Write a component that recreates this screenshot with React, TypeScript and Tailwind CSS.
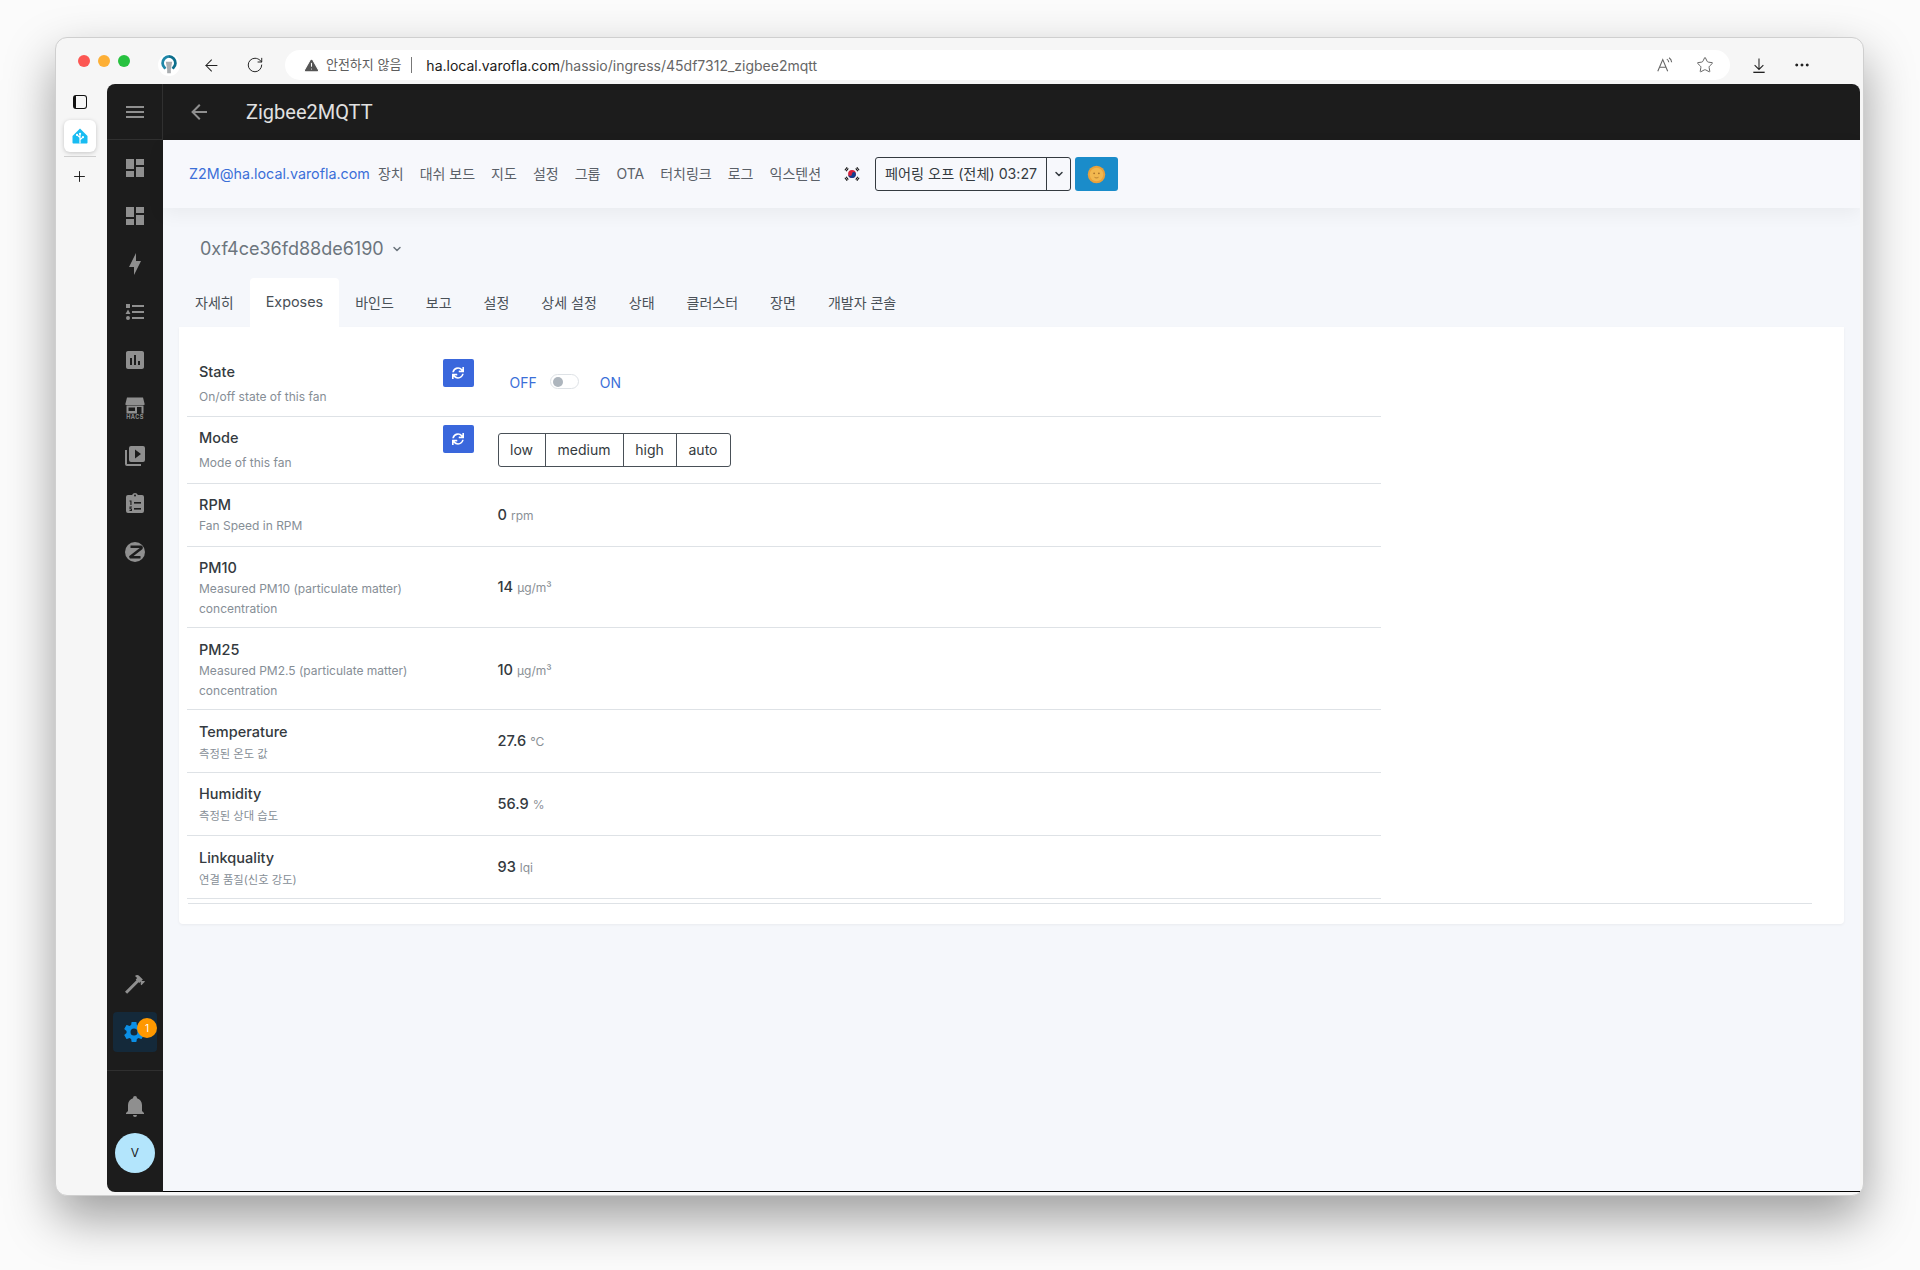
import { ReactNode } from "react"
import { FaSync } from "react-icons/fa"
import { ArrowLeft, RotateCw, Star, Ellipsis, Plus, TriangleAlert, ChevronDown } from "lucide-react"

const FONT = "font-['Inter','Noto_Sans_CJK_KR',sans-serif]"

function Mdi({ d, className = "w-6 h-6" }: { d: string; className?: string }) {
  return (
    <svg viewBox="0 0 24 24" className={className} fill="currentColor">
      <path d={d} />
    </svg>
  )
}

const DASHBOARD = "M13,3V9H21V3M13,21H21V11H13M3,21H11V15H3M3,13H11V3H3V13Z"
const BOLT = "M11 15H6L13 1V9H18L11 23V15Z"
const LIST_TYPE =
  "M5,9.5L7.5,14H2.5L5,9.5M3,4H7V8H3V4M5,20A2,2 0 0,0 7,18A2,2 0 0,0 5,16A2,2 0 0,0 3,18A2,2 0 0,0 5,20M9,5V7H21V5H9M9,19H21V17H9V19M9,13H21V11H9V13Z"
const CHART_BOX =
  "M9 17H7V10H9V17M13 17H11V7H13V17M17 17H15V13H17V17M19 3H5C3.89 3 3 3.89 3 5V19C3 20.1 3.9 21 5 21H19C20.1 21 21 20.1 21 19V5C21 3.89 20.1 3 19 3Z"
const PLAY_BOX =
  "M4,6H2V20A2,2 0 0,0 4,22H18V20H4V6M20,2A2,2 0 0,1 22,4V16A2,2 0 0,1 20,18H8A2,2 0 0,1 6,16V4A2,2 0 0,1 8,2H20M12,14.5L18,10L12,5.5V14.5Z"
const HAMMER =
  "M2 19.63L13.43 8.2L12.72 7.5L14.14 6.07L12 3.89C13.2 2.7 15.09 2.7 16.27 3.89L19.87 7.5L18.45 8.91H21.29L22 9.62L18.45 13.21L17.74 12.5V9.62L16.27 11.04L15.56 10.33L4.13 21.76L2 19.63Z"
const COG =
  "M12,15.5A3.5,3.5 0 0,1 8.5,12A3.5,3.5 0 0,1 12,8.5A3.5,3.5 0 0,1 15.5,12A3.5,3.5 0 0,1 12,15.5M19.43,12.97C19.47,12.65 19.5,12.33 19.5,12C19.5,11.67 19.47,11.34 19.43,11L21.54,9.37C21.73,9.22 21.78,8.95 21.66,8.73L19.66,5.27C19.54,5.05 19.27,4.96 19.05,5.05L16.56,6.05C16.04,5.66 15.5,5.32 14.87,5.07L14.5,2.42C14.46,2.18 14.25,2 14,2H10C9.75,2 9.54,2.18 9.5,2.42L9.13,5.07C8.5,5.32 7.96,5.66 7.44,6.05L4.95,5.05C4.73,4.96 4.46,5.05 4.34,5.27L2.34,8.73C2.21,8.95 2.27,9.22 2.46,9.37L4.57,11C4.53,11.34 4.5,11.67 4.5,12C4.5,12.33 4.53,12.65 4.57,12.97L2.46,14.63C2.27,14.78 2.21,15.05 2.34,15.27L4.34,18.73C4.46,18.95 4.73,19.03 4.95,18.95L7.44,17.94C7.96,18.34 8.5,18.68 9.13,18.93L9.5,21.58C9.54,21.82 9.75,22 10,22H14C14.25,22 14.46,21.82 14.5,21.58L14.87,18.93C15.5,18.67 16.04,18.34 16.56,17.94L19.05,18.95C19.27,19.03 19.54,18.95 19.66,18.73L21.66,15.27C21.78,15.05 21.73,14.78 21.54,14.63L19.43,12.97Z"
const BELL =
  "M21,19V20H3V19L5,17V11C5,7.9 7.03,5.17 10,4.29C10,4.19 10,4.1 10,4A2,2 0 0,1 12,2A2,2 0 0,1 14,4C14,4.1 14,4.19 14,4.29C16.97,5.17 19,7.9 19,11V17L21,19M14,21A2,2 0 0,1 12,23A2,2 0 0,1 10,21"
const MENU = "M3,6H21V8H3V6M3,11H21V13H3V11M3,16H21V18H3V16Z"
const BACK = "M20,11V13H8L13.5,18.5L12.08,19.92L4.16,12L12.08,4.08L13.5,5.5L8,11H20Z"

function HacsIcon() {
  return (
    <svg viewBox="0 0 24 24" className="w-6 h-6" fill="currentColor">
      <path d="M4 1.5H20L21.5 7.5V9H2.5V7.5L4 1.5Z" />
      <path d="M3.5 9.5H20.5V17.5H18.5V11H14V17.5H3.5V9.5Z" />
      <rect x="5.5" y="11.5" width="6.5" height="3.5" fill="#1c1c1c" />
      <text x="12" y="23" textAnchor="middle" fontSize="5.6" fontWeight="700" fontFamily="Inter" letterSpacing="0.4">
        HACS
      </text>
    </svg>
  )
}

function ClipboardIcon() {
  return (
    <svg viewBox="0 0 24 24" className="w-6 h-6" fill="currentColor">
      <path d="M19,3H14.82C14.4,1.84 13.3,1 12,1C10.7,1 9.6,1.84 9.18,3H5A2,2 0 0,0 3,5V19A2,2 0 0,0 5,21H19A2,2 0 0,0 21,19V5A2,2 0 0,0 19,3Z" />
      <circle cx="12" cy="3.6" r="1" fill="#1c1c1c" />
      <path d="M6.5 8.5H8.5V13H7.4V9.6H6.5ZM6.5 14.5H9V15.6H7.6V16.4H9V19H6.5V17.9H7.9V17.2H6.5Z" fill="#1c1c1c" />
      <rect x="11" y="10" width="7" height="1.6" fill="#1c1c1c" />
      <rect x="11" y="16" width="7" height="1.6" fill="#1c1c1c" />
    </svg>
  )
}

function ZigbeeIcon() {
  return (
    <svg viewBox="0 0 24 24" className="w-6 h-6">
      <circle cx="12" cy="12" r="10" fill="currentColor" />
      <path d="M7.5 6.8H18.5V8.2L6.8 17.2H17.5" fill="none" stroke="#1c1c1c" strokeWidth="2.6" strokeLinejoin="bevel" />
    </svg>
  )
}

function HomeLogo() {
  return (
    <svg viewBox="0 0 24 24" className="w-[18px] h-[18px]">
      <path d="M12 2L22 12V20.5C22 21.3 21.3 22 20.5 22H3.5C2.7 22 2 21.3 2 20.5V12Z" fill="#18bcf2" />
      <path d="M12 22V9M12 14L8 10.5M12 17L16 13.5" fill="none" stroke="#fff" strokeWidth="1.6" />
      <circle cx="12" cy="9" r="1.5" fill="#fff" />
      <circle cx="8" cy="10.5" r="1.4" fill="#fff" />
      <circle cx="16" cy="13.5" r="1.4" fill="#fff" />
    </svg>
  )
}

function BulbLogo() {
  return (
    <svg viewBox="0 0 24 24" className="w-[22px] h-[24px]">
      <circle cx="12" cy="12" r="12" fill="#fff" />
      <path d="M12 2.5A7.5 7.5 0 0 1 19 10C19 13 17 14.5 16 16" fill="none" stroke="#0e6f8c" strokeWidth="3" />
      <path d="M12 2.5A7.5 7.5 0 0 0 5 10C5 13 7 14.5 8 16" fill="none" stroke="#1f87a8" strokeWidth="3" />
      <path d="M8.5 8.5H15.5L14 16.5V21H10V16.5Z" fill="#a9adb0" />
    </svg>
  )
}

function KoreaFlag() {
  return (
    <svg viewBox="0 0 24 24" className="w-[18px] h-[18px]">
      <circle cx="12" cy="12" r="5.2" fill="#d8213a" />
      <path d="M6.8 12A5.2 5.2 0 0 0 17.2 12A2.6 2.6 0 0 0 12 12A2.6 2.6 0 0 1 6.8 12Z" fill="#123f8f" />
      <g stroke="#111" strokeWidth="1.5">
        <path d="M2.5 7L5.5 3M4.2 8.3L7 4.5" />
        <path d="M18.5 3L21.5 7M17 4.5L19.8 8.3" />
        <path d="M2.5 17L5.5 21M4.2 15.7L7 19.5" />
        <path d="M18.5 21L21.5 17M17 19.5L19.8 15.7" />
      </g>
    </svg>
  )
}

function SunFace() {
  return (
    <svg viewBox="0 0 24 24" className="w-[19px] h-[19px]">
      <circle cx="12" cy="12" r="11" fill="#e9a13b" />
      <circle cx="12" cy="12" r="8.5" fill="#f2b84f" />
      <circle cx="9" cy="10.5" r="1.1" fill="#a8702a" />
      <circle cx="15" cy="10.5" r="1.1" fill="#a8702a" />
      <path d="M9.5 15.5C11 16.5 13 16.5 14.5 15.5" fill="none" stroke="#a8702a" strokeWidth="1" />
    </svg>
  )
}

function ReadAloud() {
  return (
    <svg viewBox="0 0 20 20" className="w-[18px] h-[18px]" fill="none" stroke="#666" strokeWidth="1.2">
      <path d="M2 17L7.5 4L13 17M4 12.5H11" />
      <path d="M12 3.5C13.2 4.2 14 5.4 14.2 7M14.5 2C16.2 3 17.2 4.8 17.4 7" />
    </svg>
  )
}

function DownloadArrow() {
  return (
    <svg viewBox="0 0 16 18" className="w-[14px] h-[17px] ml-[22px]" fill="none" stroke="#222" strokeWidth="1.2">
      <path d="M8 1V13M3 8.5L8 13.5L13 8.5" />
      <path d="M1.5 16.8H14.5" strokeWidth="1.5" />
    </svg>
  )
}

function Sidebar() {
  const top: ReactNode[] = [
    <Mdi d={DASHBOARD} />,
    <Mdi d={DASHBOARD} />,
    <Mdi d={BOLT} />,
    <Mdi d={LIST_TYPE} />,
    <Mdi d={CHART_BOX} />,
    <HacsIcon />,
    <Mdi d={PLAY_BOX} />,
    <ClipboardIcon />,
    <ZigbeeIcon />,
  ]
  return (
    <div className="w-[56px] shrink-0 flex flex-col text-[#8f8f8f] bg-[#1c1c1c]">
      <div className="h-[56px] flex items-center justify-center border-r border-b border-[#303030]">
        <Mdi d={MENU} />
      </div>
      <div className="flex flex-col items-center pt-[4px]">
        {top.map((icon, i) => (
          <div key={i} className="h-[48px] flex items-center justify-center">
            {icon}
          </div>
        ))}
      </div>
      <div className="mt-auto flex flex-col items-center">
        <Mdi d={HAMMER} />
        <div className="relative mt-[16px] w-[44px] h-[40px] rounded flex items-center justify-center bg-[#14293a] text-[#0b8fe6]">
          <Mdi d={COG} className="w-6 h-6 -ml-[2px]" />
          <span className="absolute left-[24px] top-[6px] w-5 h-5 rounded-full bg-[#ff9800] text-white text-[10px] flex items-center justify-center">
            1
          </span>
        </div>
        <div className="mt-[18px] w-full h-px bg-[#2f2f2f]" />
        <div className="mt-[23px]">
          <Mdi d={BELL} />
        </div>
        <div className="mt-[15px] mb-[19px] w-10 h-10 rounded-full bg-[#b3e5fc] text-[#1c1c1c] text-xs flex items-center justify-center">
          V
        </div>
      </div>
    </div>
  )
}

const NAV = ["장치", "대쉬 보드", "지도", "설정", "그룹", "OTA", "터치링크", "로그", "익스텐션"]
const TABS = ["자세히", "Exposes", "바인드", "보고", "설정", "상세 설정", "상태", "클러스터", "장면", "개발자 콘솔"]

function NavBar() {
  return (
    <div className="h-[68px] shrink-0 flex items-center pl-[26px] bg-[#f7f8fc] text-[#5a6068] shadow-[0_6px_18px_rgba(0,0,0,0.05)] relative">
      <span className="text-[14.3px] text-[#3b6fd8] mr-2">Z2M@ha.local.varofla.com</span>
      <div className="flex gap-4 text-sm">
        {NAV.map((n) => (
          <span key={n}>{n}</span>
        ))}
      </div>
      <div className="ml-[22px]">
        <KoreaFlag />
      </div>
      <div className="ml-[14px] h-[34px] w-[196px] flex border border-[#343a40] rounded-[3px] text-[14.2px] text-[#343a40]">
        <span className="w-[171px] flex items-center justify-center border-r border-[#343a40] whitespace-nowrap">
          페어링 오프 (전체) 03:27
        </span>
        <span className="flex-1 flex items-center justify-center">
          <ChevronDown size={12} strokeWidth={3} />
        </span>
      </div>
      <div className="ml-[4px] h-[34px] w-[43px] rounded-[3px] bg-[#1a8cca] flex items-center justify-center">
        <SunFace />
      </div>
    </div>
  )
}

function Refresh({ className }: { className: string }) {
  return (
    <div className={`w-[31px] h-[28px] rounded-[2px] bg-[#3a67dc] text-white flex items-center justify-center ${className}`}>
      <FaSync size={12} />
    </div>
  )
}

function Label({ title, sub, extra, korean }: { title: string; sub: string; extra?: boolean; korean?: boolean }) {
  return (
    <div className="w-[230px]">
      <div className="text-[14.5px] leading-[22px] font-medium text-[#343a40]">{title}</div>
      <div
        className={`leading-[20px] text-[#868e96] ${extra ? "mt-1" : ""} ${korean ? "text-[11.3px] mt-[1px]" : "text-xs"}`}
      >
        {sub}
      </div>
    </div>
  )
}

function Reading({ value, unit, lower }: { value: string; unit: string; lower?: boolean }) {
  return (
    <div className={`w-full flex items-baseline gap-[4px] ${lower ? "pt-[4px]" : "pt-[2px]"}`}>
      <span className="text-[14.6px] font-medium text-[#343a40]">{value}</span>
      <span className="text-[12px] text-[#8a9096]">{unit}</span>
    </div>
  )
}

function Row({
  height,
  pad,
  left,
  right,
}: {
  height: string
  pad: string
  left: ReactNode
  right: ReactNode
}) {
  return (
    <div className={`flex items-center border-b border-[#dee2e6] ${height}`}>
      <div className={`w-[310.5px] shrink-0 self-start pl-3 pr-6 flex justify-between ${pad}`}>{left}</div>
      <div className="flex-1">{right}</div>
    </div>
  )
}

function ExposesCard() {
  return (
    <div className="mr-4 h-[597px] rounded-b bg-white pt-[23px] pl-[8px] pr-[32px] shadow-[0_1px_3px_rgba(0,0,0,0.05)]">
      <div className="w-[1194px]">
        <Row
          height="h-[67px]"
          pad="pt-[11px]"
          left={
            <>
              <Label title="State" sub="On/off state of this fan" extra />
              <Refresh className="-mt-[2px]" />
            </>
          }
          right={
            <div className="flex items-center pl-[12px] text-sm text-[#3b6fd8]">
              <span>OFF</span>
              <span className="ml-[13px] -mt-[3px] w-[29px] h-[15px] rounded-full border border-[#dee2e6] bg-white flex items-center pl-[2px]">
                <span className="w-[10px] h-[10px] rounded-full bg-[#adb5bd]" />
              </span>
              <span className="ml-[21px]">ON</span>
            </div>
          }
        />
        <Row
          height="h-[67px]"
          pad="pt-[10px]"
          left={
            <>
              <Label title="Mode" sub="Mode of this fan" extra />
              <Refresh className="-mt-[2px]" />
            </>
          }
          right={
            <div className="w-[233px] h-[34px] flex border border-[#495057] rounded-[3px] text-sm text-[#343a40]">
              <span className="w-[47px] flex items-center justify-center border-r border-[#495057]">low</span>
              <span className="w-[78px] flex items-center justify-center border-r border-[#495057]">medium</span>
              <span className="w-[53px] flex items-center justify-center border-r border-[#495057]">high</span>
              <span className="flex-1 flex items-center justify-center">auto</span>
            </div>
          }
        />
        <Row height="h-[63px]" pad="pt-[10px]" left={<Label title="RPM" sub="Fan Speed in RPM" />} right={<Reading value="0" unit="rpm" />} />
        <Row
          height="h-[81px]"
          pad="pt-[10px]"
          left={<Label title="PM10" sub="Measured PM10 (particulate matter) concentration" />}
          right={<Reading value="14" unit="µg/m³" />}
        />
        <Row
          height="h-[82px]"
          pad="pt-[11px]"
          left={<Label title="PM25" sub="Measured PM2.5 (particulate matter) concentration" />}
          right={<Reading value="10" unit="µg/m³" lower />}
        />
        <Row height="h-[63px]" pad="pt-[11px]" left={<Label title="Temperature" sub="측정된 온도 값" korean />} right={<Reading value="27.6" unit="°C" />} />
        <Row height="h-[63px]" pad="pt-[10px]" left={<Label title="Humidity" sub="측정된 상대 습도" korean />} right={<Reading value="56.9" unit="%" />} />
        <Row height="h-[63px]" pad="pt-[11px]" left={<Label title="Linkquality" sub="연결 품질(신호 강도)" korean />} right={<Reading value="93" unit="lqi" />} />
      </div>
      <div className="mt-[4px] ml-[1px] h-px bg-[#dee2e6]" />
    </div>
  )
}

function BrowserBar() {
  return (
    <div className="h-[46px] shrink-0 flex items-center pl-[22px] pr-[52px] pt-[8px]">
      <div className="flex items-center gap-2 -mt-[8px]">
        <span className="w-3 h-3 rounded-full bg-[#fc5753]" />
        <span className="w-3 h-3 rounded-full bg-[#fdaf36]" />
        <span className="w-3 h-3 rounded-full bg-[#27c13f]" />
      </div>
      <div className="ml-[28px]">
        <BulbLogo />
      </div>
      <ArrowLeft size={19} strokeWidth={1.3} className="ml-[22px] text-[#222]" />
      <RotateCw size={18} strokeWidth={1.3} className="ml-[25px] text-[#222]" />
      <div className="ml-[21px] w-[1447px] h-[30px] rounded-full bg-white flex items-center pl-[18px] pr-[16px]">
        <TriangleAlert size={17} fill="#555" stroke="#fff" strokeWidth={1.5} className="shrink-0" />
        <span className="ml-[6px] text-[#5d5d5d] text-[13px]">안전하지 않음</span>
        <span className="ml-[10px] w-px h-[16px] bg-[#777]" />
        <span className="ml-[14px] text-[14px] text-[#1a1a1a]">
          ha.local.varofla.com<span className="text-[#666]">/hassio/ingress/45df7312_zigbee2mqtt</span>
        </span>
        <div className="ml-auto flex items-center gap-[22px]">
          <ReadAloud />
          <Star size={18} strokeWidth={1.2} className="text-[#555]" />
        </div>
      </div>
      <DownloadArrow />
      <Ellipsis size={18} className="ml-[27px] text-[#222]" />
    </div>
  )
}

export default function App() {
  return (
    <div className={`${FONT} w-[1920px] h-[1270px] overflow-hidden bg-[#fbfbfb] pt-[37px] pl-[55px]`}>
      <div className="w-[1809px] h-[1159px] flex flex-col rounded-[12px] border border-[#cfcfcf] bg-[#f6f6f6] shadow-[0_22px_50px_rgba(0,0,0,0.38)]">
        <BrowserBar />
        <div className="flex-1 flex min-h-0 pb-[3px] pr-[3px]">
          <div className="w-[51px] shrink-0 flex flex-col items-center pt-[11px] pr-[4px] text-[#111]">
            <div className="w-[14px] h-[14px] rounded-[3px] border-[1.5px] border-[#111] border-l-[3px]" />
            <div className="mt-[11px] w-8 h-8 rounded-md bg-white shadow-[0_1px_4px_rgba(0,0,0,0.2)] flex items-center justify-center">
              <HomeLogo />
            </div>
            <div className="mt-1 w-8 h-px bg-[#cfcfcf]" />
            <Plus size={17} strokeWidth={1.3} className="mt-[11px]" />
          </div>
          <div className="flex-1 flex rounded-lg overflow-hidden rounded-br-none">
            <Sidebar />
            <div className="flex-1 flex flex-col bg-[#f5f7fb] border-b border-black">
              <div className="h-[56px] shrink-0 bg-[#1c1c1c] flex items-center pl-[24px] text-[#e1e1e1]">
                <Mdi d={BACK} className="w-6 h-6 text-[#8f8f8f]" />
                <span className="ml-[35px] text-[20px] font-['Roboto',sans-serif]">Zigbee2MQTT</span>
              </div>
              <NavBar />
              <div className="flex-1 pl-[16px]">
                <div className="mt-[27px] mb-[15px] pl-[21px] h-[28px] flex items-center text-lg text-[#6c757d]">
                  0xf4ce36fd88de6190
                  <ChevronDown size={12} strokeWidth={3} className="ml-[7px]" />
                </div>
                <div className="h-[49px] flex text-sm text-[#495057]">
                  {TABS.map((t) => (
                    <div key={t} className={`px-4 flex items-center ${t === "Exposes" ? "bg-white rounded-t text-[14.4px]" : ""}`}>
                      {t}
                    </div>
                  ))}
                </div>
                <ExposesCard />
              </div>
            </div>
          </div>
        </div>
      </div>
    </div>
  )
}
